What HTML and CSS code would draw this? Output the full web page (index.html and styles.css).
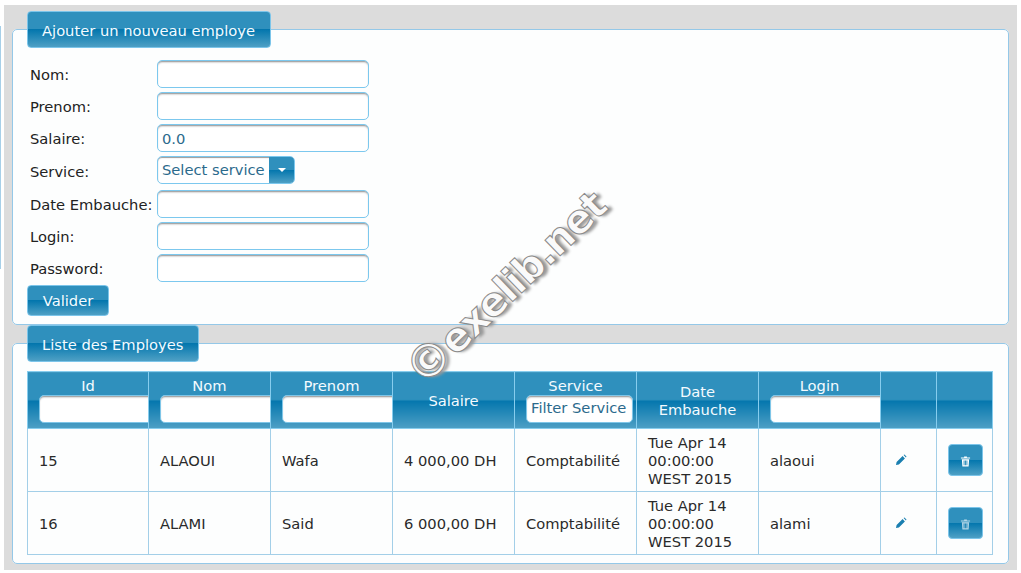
FILE: index.html
```html
<!DOCTYPE html>
<html lang="fr">
<head>
<meta charset="utf-8">
<title>Employes</title>
<link rel="stylesheet" href="styles.css">
</head>
<body>
<div class="edge"></div>
<main class="page">
  <fieldset class="panel panel-form">
    <legend class="legend">Ajouter un nouveau employe</legend>
    <form class="form">
      <label class="lbl">Nom:</label><input class="inp" type="text">
      <label class="lbl">Prenom:</label><input class="inp" type="text">
      <label class="lbl">Salaire:</label><input class="inp" type="text" value="0.0">
      <label class="lbl">Service:</label>
      <div class="select"><span class="select-label">Select service</span><span class="select-btn"><span class="caret"></span></span></div>
      <label class="lbl">Date Embauche:</label><input class="inp" type="text">
      <label class="lbl">Login:</label><input class="inp" type="text">
      <label class="lbl">Password:</label><input class="inp" type="password">
    </form>
    <button class="btn" type="button">Valider</button>
  </fieldset>
  <fieldset class="panel panel-list">
    <legend class="legend">Liste des Employes</legend>
    <table class="table">
      <colgroup>
        <col class="c-first"><col class="c"><col class="c"><col class="c"><col class="c"><col class="c"><col class="c"><col class="c-e"><col class="c-d">
      </colgroup>
      <thead>
        <tr>
          <th><span class="th-t">Id</span><input class="flt" type="text"></th>
          <th><span class="th-t">Nom</span><input class="flt" type="text"></th>
          <th><span class="th-t">Prenom</span><input class="flt" type="text"></th>
          <th class="th-2">Salaire</th>
          <th><span class="th-t">Service</span><input class="flt flt-s" type="text" value="Filter Service"></th>
          <th class="th-2">Date Embauche</th>
          <th><span class="th-t">Login</span><input class="flt" type="text"></th>
          <th></th>
          <th></th>
        </tr>
      </thead>
      <tbody>
        <tr>
          <td>15</td><td>ALAOUI</td><td>Wafa</td><td>4 000,00 DH</td><td>Comptabilité</td>
          <td>Tue Apr 14 00:00:00 WEST 2015</td><td>alaoui</td>
          <td class="act act-e"><svg class="pen" viewBox="0 0 12 12"><path d="M1 11l.6-2.9L7.6 2.1l2.3 2.3-6 6z M8.6 1.1l.8-.6 2.1 2.1-.6.9z" fill="#1a7fb0"/></svg></td>
          <td class="act"><button class="del" type="button"><svg class="bin" viewBox="0 0 12 12"><path d="M4.5 1.5V.6h3v.9H11v1.2H1V1.500z M2 3.500h8L9.400 11.500H2.600z M4 5v5h.9V5z M5.600 5v5h.9V5z M7.100 5v5H8V5z" fill="#fff" fill-rule="evenodd"/></svg></button></td>
        </tr>
        <tr>
          <td>16</td><td>ALAMI</td><td>Said</td><td>6 000,00 DH</td><td>Comptabilité</td>
          <td>Tue Apr 14 00:00:00 WEST 2015</td><td>alami</td>
          <td class="act act-e"><svg class="pen" viewBox="0 0 12 12"><path d="M1 11l.6-2.9L7.6 2.1l2.3 2.3-6 6z M8.6 1.1l.8-.6 2.1 2.1-.6.9z" fill="#1a7fb0"/></svg></td>
          <td class="act"><button class="del" type="button"><svg class="bin bin-dim" viewBox="0 0 12 12"><path d="M4.5 1.5V.6h3v.9H11v1.2H1V1.500z M2 3.500h8L9.400 11.500H2.600z M4 5v5h.9V5z M5.600 5v5h.9V5z M7.100 5v5H8V5z" fill="#fff" fill-rule="evenodd"/></svg></button></td>
        </tr>
      </tbody>
    </table>
  </fieldset>
</main>
<div class="watermark"><span class="wm-c">©</span>exelib.net</div>
</body>
</html>
```
FILE: styles.css
```css
* { box-sizing: border-box; }
html { background: #fff; height: 100%; }
body {
  margin: 5px 4px 0;
  height: 565px;
  background: #dcdcdc;
  font-family: "DejaVu Sans", Verdana, sans-serif;
  font-size: 14.7px;
  color: #222;
  overflow: hidden;
}
.edge {
  position: absolute;
  left: 0;
  top: 26px;
  width: 1px;
  height: 243px;
  background: #a6cfe8;
}
.page {
  padding: 6px 8px 0;
  display: flex;
  flex-direction: column;
}
.panel {
  margin: 0;
  min-width: 0;
  border: 1px solid #94c8e8;
  border-radius: 5px;
  background: #fdfefe;
  padding: 0 14px 8px;
}
.panel-form { height: 314px; }
.panel-list { height: 239px; }
.legend,
.btn,
.del,
.select-btn,
.table th {
  background: linear-gradient(to bottom, #2f90bd 0, #2f90bd 49%, #0376ad 50%, #4ea0c5 100%);
}
.legend {
  margin: 0;
  padding: 0 15px 0 14px;
  height: 37px;
  line-height: 37px;
  border: 1px solid #7cc5ea;
  border-radius: 4px;
  color: #f4fbff;
  font-size: 14.7px;
  white-space: nowrap;
}
.form {
  display: grid;
  grid-template-columns: 130px 212px;
  row-gap: 4px;
  align-items: center;
  margin-top: 12px;
}
.lbl {
  padding-left: 3px;
  white-space: nowrap;
}
.inp {
  width: 212px;
  height: 28px;
  padding: 0 4px;
  border: 1px solid #7cc8ee;
  border-radius: 5px;
  background: #fff;
  box-shadow: inset 0 2px 2px -1px #8a8a8a;
  font: 14.7px "DejaVu Sans", Verdana, sans-serif;
  color: #2b6a8c;
  outline: 0;
}
.select {
  display: flex;
  width: 138px;
  height: 28px;
  margin-bottom: 2px;
  border: 1px solid #7cc8ee;
  border-radius: 5px;
  background: #fff;
  overflow: hidden;
  color: #2b6a8c;
  box-shadow: inset 0 1px 1px #9a9a9a;
}
.select-label {
  flex: 1;
  padding-left: 4px;
  line-height: 26px;
  white-space: nowrap;
}
.select-btn {
  width: 25px;
  display: flex;
  align-items: center;
  justify-content: center;
}
.caret {
  width: 0;
  height: 0;
  border: 4px solid transparent;
  border-top: 4px solid #fff;
  border-bottom: 0;
}
.btn {
  display: block;
  margin-top: 3px;
  width: 82px;
  height: 31px;
  padding: 0;
  border: 1px solid #7cc5ea;
  border-radius: 4px;
  color: #f4fbff;
  font: 14.7px "DejaVu Sans", Verdana, sans-serif;
}
.table {
  margin-top: 9px;
  width: 965px;
  table-layout: fixed;
  border-collapse: collapse;
}
.c-first { width: 121px; }
.c { width: 122px; }
.c-e { width: 56px; }
.c-d { width: 56px; }
.table th {
  height: 57px;
  padding: 0 11px;
  border: 1px solid #87cdee;
  color: #f4fbff;
  font-weight: normal;
  line-height: 18px;
  text-align: center;
  overflow: hidden;
}
.table th.th-2 { padding-top: 2px; }
.th-t { display: block; }
.flt {
  display: block;
  width: 122px;
  height: 28px;
  padding: 0 4px;
  border: 1px solid #7fc6e8;
  border-radius: 5px;
  background: #fff;
  box-shadow: inset 0 2px 2px -1px #8a8a8a;
  font: 14.7px "DejaVu Sans", Verdana, sans-serif;
  color: #2b6a8c;
  outline: 0;
}
.flt-s { width: 107px; padding-bottom: 3px; }
.table td {
  height: 63px;
  padding: 1px 11px 0;
  border: 1px solid #a3cfe8;
  line-height: 18px;
  color: #2a2a2a;
}
.table td.act { padding: 0 0 0 11px; }
.table td.act-e { padding-left: 14px; }
.pen { display: block; width: 12px; height: 12px; }
.del {
  display: flex;
  align-items: center;
  justify-content: center;
  width: 35px;
  height: 32px;
  padding: 3px 0 0;
  border: 1px solid #7cc5ea;
  border-radius: 4px;
}
.bin { width: 11px; height: 11px; }
.bin-dim { opacity: .65; }
.watermark {
  position: absolute;
  left: 345px;
  top: 260px;
  width: 320px;
  text-align: center;
  transform: rotate(-44deg);
  font-size: 40px;
  font-weight: bold;
  font-family: "DejaVu Sans", sans-serif;
  letter-spacing: -1.3px;
  white-space: nowrap;
  color: #fafafa;
  -webkit-text-stroke: 1px #8a8a8a;
  text-shadow: 3px 3px 3px #9a9a9a;
  pointer-events: none;
}
.wm-c { font-size: 46px; }
```
